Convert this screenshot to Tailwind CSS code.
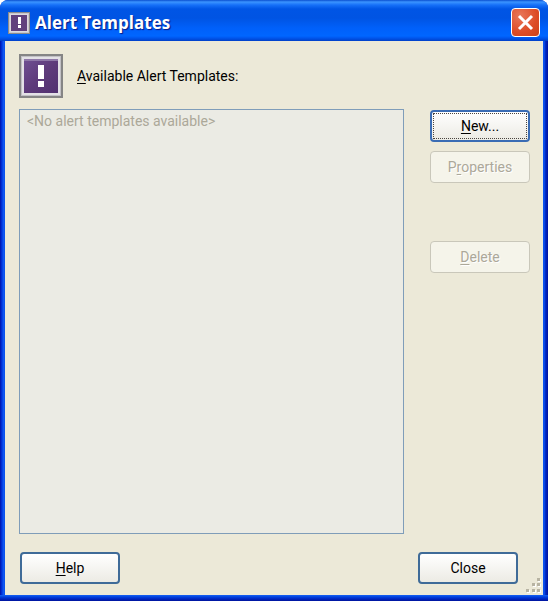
<!DOCTYPE html>
<html lang="en">
<head>
    <meta charset="UTF-8">
    <meta name="viewport" content="width=device-width, initial-scale=1.0">
    <title>Alert Templates</title>
    <script src="https://cdn.jsdelivr.net/npm/@tailwindcss/browser@4"></script>
</head>
<body class="bg-white font-['Roboto','Liberation_Sans',sans-serif] text-sm text-black">
    <div class="flex flex-col min-h-screen rounded-t-lg overflow-hidden bg-[linear-gradient(to_right,#0010a8_0,#0038e0_2px,#1660f5_4px,#0046e6_5px,#0046e6_calc(100%-5px),#1660f5_calc(100%-4px),#0030d0_calc(100%-3px),#00129c_100%)]">
        <!-- Title bar -->
        <header class="flex items-center h-[41px] pl-2 pr-2 pt-1 bg-[linear-gradient(to_bottom,#0a4fd0_0,#3b94ff_2px,#1670f8_5px,#0055e5_9px,#0054e3_18px,#0060fa_28px,#0066ff_36px,#0056ee_38px,#0040c8_41px)]">
            <svg class="w-[22px] h-[22px]" viewBox="0 0 22 22">
                <rect width="22" height="22" fill="#8b8b8b" />
                <rect x="1" y="1" width="20" height="20" fill="#c9c7cd" />
                <rect x="2" y="2" width="18" height="18" fill="#dcdae0" />
                <rect x="3" y="3" width="16" height="16" fill="#61417d" />
                <path d="M10 5h3v7h-3zM10 13h3v3h-3z" fill="#fff" />
            </svg>
            <h1 class="flex-1 ml-[5px] font-['Open_Sans','Noto_Sans',sans-serif] text-[17px] leading-6 font-bold text-white [text-shadow:1px_1px_1px_#0a1883]">Alert Templates</h1>
            <button type="button" aria-label="Close window" class="flex items-center justify-center w-[29px] h-[29px] rounded border border-white bg-[radial-gradient(circle_at_30%_25%,#e8775a,#dd4c26_60%,#cc4218)]">
                <svg class="w-[17px] h-[17px]" viewBox="0 0 17 17" fill="none" stroke="#fff" stroke-width="3">
                    <path d="M2 2l13 13M15 2L2 15" />
                </svg>
            </button>
        </header>

        <main class="flex-1 flex flex-col mx-[5px] px-[14px] pt-[13px] pb-[11px] bg-[#ece9d8] relative">
            <div class="flex items-center mb-[11px]">
                <svg class="w-11 h-11" viewBox="0 0 44 44">
                    <defs>
                        <linearGradient id="plum" x1="0" y1="0" x2="1" y2="1">
                            <stop offset="0" stop-color="#6f5093" />
                            <stop offset=".5" stop-color="#5e3b7b" />
                            <stop offset="1" stop-color="#513070" />
                        </linearGradient>
                    </defs>
                    <rect width="44" height="44" fill="#858585" />
                    <rect x="2" y="2" width="40" height="40" fill="#c2c1c5" />
                    <rect x="3" y="3" width="38" height="38" fill="#e3e1e6" />
                    <rect x="5" y="5" width="34" height="34" fill="url(#plum)" />
                    <path d="M5 5h34v2H5z" fill="#8e78a8" />
                    <path d="M19 11h6v14h-6zM19 27h6v6h-6z" fill="#fff" />
                </svg>
                <label for="templates" class="ml-[14px]"><u class="underline-offset-2">A</u>vailable Alert Templates:</label>
            </div>

            <div class="flex-1 flex">
                <div class="flex-1 flex border border-[#7f9db9] bg-[#ebebe4]">
                    <select id="templates" size="2" disabled class="flex-1 appearance-none border-0 bg-transparent px-[3px] py-[3px] opacity-100 overflow-hidden">
                        <option disabled class="px-1 text-sm text-[#aca899]">&lt;No alert templates available&gt;</option>
                    </select>
                </div>
                <div class="flex flex-col ml-[26px] -mr-px pt-px w-[100px]">
                    <button type="button" class="h-8 p-px rounded-[4px] border-2 border-[#3a6cb4] bg-linear-to-b from-white to-[#ecebe4]">
                        <span class="flex items-center justify-center h-full border border-dotted border-[#4a4440]"><span><u class="underline-offset-2">N</u>ew...</span></span>
                    </button>
                    <button type="button" disabled class="mt-[9px] h-8 rounded-[4px] border border-[#c9c7ba] bg-[#f5f4ea] text-[#aca899] [text-shadow:1px_1px_0_#fff]">P<u class="underline-offset-2">r</u>operties</button>
                    <button type="button" disabled class="mt-[58px] h-8 rounded-[4px] border border-[#c9c7ba] bg-[#f5f4ea] text-[#aca899] [text-shadow:1px_1px_0_#fff]"><u class="underline-offset-2">D</u>elete</button>
                </div>
            </div>

            <footer class="flex justify-between mt-[18px] pl-px pr-[11px]">
                <button type="button" class="w-[100px] h-8 rounded-[4px] border-2 border-[#3f6b98] bg-linear-to-b from-white to-[#ecebe4]"><u class="underline-offset-2">H</u>elp</button>
                <button type="button" class="w-[100px] h-8 rounded-[4px] border-2 border-[#3f6b98] bg-linear-to-b from-white to-[#ecebe4]">Close</button>
            </footer>

            <!-- Resize grip -->
            <svg class="absolute right-[2px] bottom-[2px] w-4 h-4 cursor-se-resize" viewBox="0 0 16 16">
                <path d="M13 2h3v3h-3zM8 7h3v3H8zM13 7h3v3h-3zM2 13h3v3H2zM8 13h3v3H8zM13 13h3v3h-3z" fill="#fff" />
                <path d="M12 1h3v3h-3zM7 6h3v3H7zM12 6h3v3h-3zM1 12h3v3H1zM7 12h3v3H7zM12 12h3v3h-3z" fill="#b8b4a3" />
            </svg>
        </main>
        <div class="h-[6px] bg-linear-to-b from-[#1660f5] via-[#0030d0] to-[#00129c]"></div>
    </div>
</body>
</html>
